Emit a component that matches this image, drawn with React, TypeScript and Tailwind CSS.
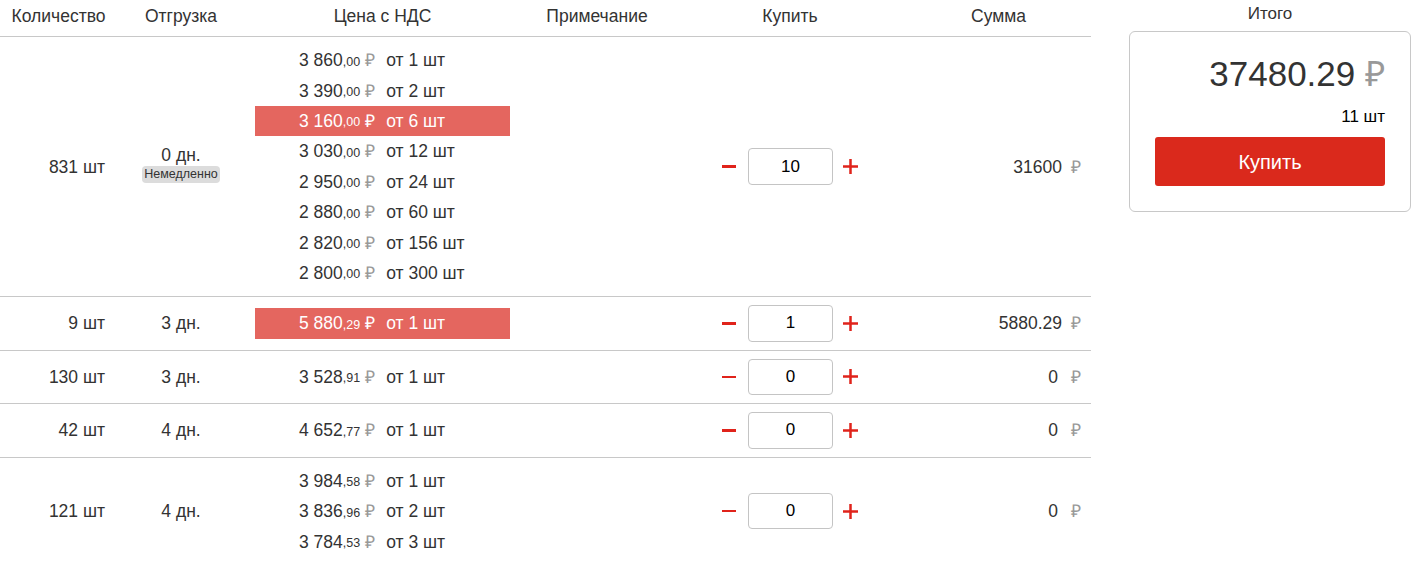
import React, { useState } from 'react';

type Tier = { int: string; dec: string; from: string; active?: boolean };

type Offer = {
  stock: string;
  days: string;
  now?: boolean;
  tiers: Tier[];
  qty: number;
  sum: string;
};

const offers: Offer[] = [
  {
    stock: '831 шт',
    days: '0 дн.',
    now: true,
    tiers: [
      { int: '3 860', dec: '00', from: 'от 1 шт' },
      { int: '3 390', dec: '00', from: 'от 2 шт' },
      { int: '3 160', dec: '00', from: 'от 6 шт', active: true },
      { int: '3 030', dec: '00', from: 'от 12 шт' },
      { int: '2 950', dec: '00', from: 'от 24 шт' },
      { int: '2 880', dec: '00', from: 'от 60 шт' },
      { int: '2 820', dec: '00', from: 'от 156 шт' },
      { int: '2 800', dec: '00', from: 'от 300 шт' }
    ],
    qty: 10,
    sum: '31600'
  },
  {
    stock: '9 шт',
    days: '3 дн.',
    tiers: [{ int: '5 880', dec: '29', from: 'от 1 шт', active: true }],
    qty: 1,
    sum: '5880.29'
  },
  {
    stock: '130 шт',
    days: '3 дн.',
    tiers: [{ int: '3 528', dec: '91', from: 'от 1 шт' }],
    qty: 0,
    sum: '0'
  },
  {
    stock: '42 шт',
    days: '4 дн.',
    tiers: [{ int: '4 652', dec: '77', from: 'от 1 шт' }],
    qty: 0,
    sum: '0'
  },
  {
    stock: '121 шт',
    days: '4 дн.',
    tiers: [
      { int: '3 984', dec: '58', from: 'от 1 шт' },
      { int: '3 836', dec: '96', from: 'от 2 шт' },
      { int: '3 784', dec: '53', from: 'от 3 шт' }
    ],
    qty: 0,
    sum: '0'
  }
];

const cols = 'grid grid-cols-[117px_128px_275px_154px_232px_185px]';

const Stepper: React.FC<{ initial: number }> = ({ initial }) => {
  const [value, setValue] = useState(initial);
  return (
    <div className="flex items-center">
      <button
        className="h-[30px] flex items-center mr-[12px]"
        onClick={() => setValue(Math.max(0, value - 1))}
      >
        <span className="block w-[14px] h-[2.5px] bg-[#e0231b]" />
      </button>
      <input
        value={value}
        onChange={(e) => setValue(Number(e.target.value) || 0)}
        className="w-[85px] h-[36.5px] border border-[#c4c4c4] rounded-[4px] text-center text-[17px] leading-[20px] text-black outline-none"
      />
      <button
        className="h-[30px] flex items-center ml-[10px]"
        onClick={() => setValue(value + 1)}
      >
        <svg width="15" height="15" viewBox="0 0 15 15">
          <rect x="0" y="6.25" width="15" height="2.5" fill="#e0231b" />
          <rect x="6.25" y="0" width="2.5" height="15" fill="#e0231b" />
        </svg>
      </button>
    </div>
  );
};

const PriceLine: React.FC<{ tier: Tier }> = ({ tier }) => (
  <div
    className={`h-[30.4px] flex items-center pl-[44px] whitespace-nowrap ${
      tier.active ? 'bg-[#e4665f] text-white' : 'text-[#333]'
    }`}
  >
    <span>{tier.int}</span>
    <span className="text-[12.5px] mt-[3px]">,{tier.dec}</span>
    <span className={`ml-[5px] ${tier.active ? 'text-white' : 'text-[#999]'}`}>₽</span>
    <span className="ml-[11px]">{tier.from}</span>
  </div>
);

const App: React.FC = () => {
  return (
    <div className="flex bg-white text-[16px] text-[#333] font-['Liberation_Sans',Arial,sans-serif] min-h-[562px]">
      {/* Table */}
      <div className="w-[1091px] shrink-0 text-[17.5px] leading-[20px]">
        <div className={`${cols} h-[37px] pt-[6px] border-b border-[#c8c8c8] text-center`}>
          <div>Количество</div>
          <div>Отгрузка</div>
          <div>Цена с НДС</div>
          <div>Примечание</div>
          <div>Купить</div>
          <div>Сумма</div>
        </div>

        {offers.map((o, i) => (
          <div key={i} className={`${cols} border-b border-[#c8c8c8] last:border-b-0`}>
            <div className="flex items-center justify-end pr-[12px]">{o.stock}</div>
            <div className="flex flex-col items-center justify-center">
              <div className={o.now ? 'mt-[-6px]' : ''}>{o.days}</div>
              {o.now && (
                <div className="mt-[1px] px-[2px] rounded-[4px] bg-[#dcdcdc] text-[12.5px] leading-[17px] text-[#333]">
                  Немедленно
                </div>
              )}
            </div>
            <div className="flex flex-col justify-center py-[8px] px-[10px]">
              {o.tiers.map((t, j) => (
                <PriceLine key={j} tier={t} />
              ))}
            </div>
            <div />
            <div className="flex items-center justify-center py-[8px]">
              <Stepper initial={o.qty} />
            </div>
            <div className="flex items-center justify-end pr-[10px]">
              <span>{o.sum}</span>
              <span className={`text-[#999] ${o.sum === '0' ? 'ml-[13px]' : 'ml-[9px]'}`}>₽</span>
            </div>
          </div>
        ))}
      </div>

      {/* Summary */}
      <div className="ml-[38px] w-[282px] shrink-0">
        <div className="text-center pt-[4px] leading-[20px] mb-[7px] text-[17px]">Итого</div>
        <div className="border border-[#c8c8c8] rounded-[6px] px-[25px] pt-[20px] pb-[25px]">
          <div className="text-right text-[35px] leading-[44px] text-[#333]">
            37480.29 <span className="text-[#999]">₽</span>
          </div>
          <div className="text-right leading-[20px] mt-[11px] text-black text-[17px]">11 шт</div>
          <button className="mt-[10px] w-full h-[49px] rounded-[3px] bg-[#da291c] text-white text-[20px]">
            Купить
          </button>
        </div>
      </div>
    </div>
  );
};

export default App;
